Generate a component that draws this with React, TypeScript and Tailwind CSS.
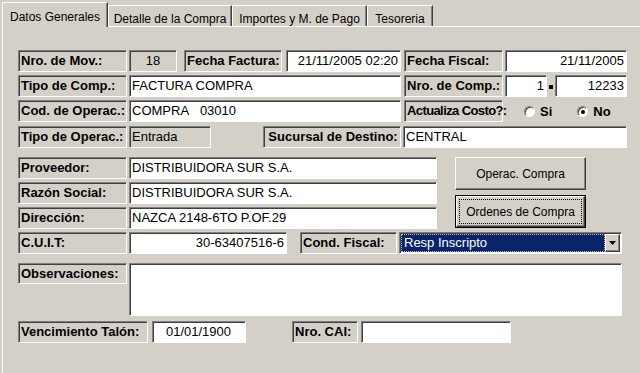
import React from 'react';

const sunken =
  'border border-t-[#808080] border-l-[#808080] border-b-white border-r-white shadow-[inset_1px_1px_0_#404040]';
const raised =
  'border border-t-white border-l-white border-b-[#404040] border-r-[#404040] shadow-[inset_-1px_-1px_0_#808080]';

function Lbl({ className = '', children }: { className?: string; children: React.ReactNode }) {
  return (
    <div className={`${sunken} h-full bg-[#d4d0c8] pl-[2px] flex items-center text-[13px] font-bold text-black whitespace-nowrap ${className}`}>
      {children}
    </div>
  );
}

function Field({ className = '', children }: { className?: string; children?: React.ReactNode }) {
  return (
    <div className={`${sunken} h-full bg-white px-[2px] flex items-center text-[13px] text-black whitespace-nowrap overflow-hidden ${className}`}>
      {children}
    </div>
  );
}

function Radio({ checked }: { checked?: boolean }) {
  return (
    <div className="w-[11px] h-[11px] rounded-full bg-white border border-t-[#808080] border-l-[#808080] border-b-white border-r-white shadow-[inset_1px_1px_0_#404040] flex items-center justify-center">
      {checked && <div className="w-[4px] h-[4px] rounded-full bg-black" />}
    </div>
  );
}

export default function App() {
  const tabs = [
    { label: 'Datos Generales', w: 'w-[106px]', active: true },
    { label: 'Detalle de la Compra', w: 'w-[124px]' },
    { label: 'Importes y M. de Pago', w: 'w-[135px]' },
    { label: 'Tesoreria', w: 'w-[66px]' },
  ];

  return (
    <div className="w-[640px] h-[373px] bg-[#d4d0c8] overflow-hidden font-['Liberation_Sans',Arial,sans-serif]">
      {/* tabs */}
      <div className="h-[26px] flex items-end pl-[2px] relative z-10">
        {tabs.map((t) =>
          t.active ? (
            <div
              key={t.label}
              className={`${t.w} h-[25px] -mb-[1px] bg-[#d4d0c8] border-l border-t border-white border-r border-r-[#404040] shadow-[inset_-1px_0_0_#808080] rounded-tl-[2px] text-[12px] text-black flex justify-center pt-[5px]`}
            >
              {t.label}
            </div>
          ) : (
            <div
              key={t.label}
              className={`${t.w} h-[21px] bg-[#d4d0c8] border-l border-t border-white border-r border-r-[#404040] shadow-[inset_-1px_0_0_#808080] text-[12px] text-black flex justify-center pt-[4px]`}
            >
              {t.label}
            </div>
          )
        )}
      </div>

      {/* panel */}
      <div className="ml-[2px] h-[360px] border-l border-t border-white pl-[15px] pt-[23px]">
        {/* row 1 */}
        <div className="h-[22px] flex">
          <Lbl className="w-[109px]">Nro. de Mov.:</Lbl>
          <div className={`${sunken} ml-[2px] w-[48px] h-full bg-[#d4d0c8] flex items-center justify-center text-[13px]`}>18</div>
          <Lbl className="ml-[7px] w-[98px]">Fecha Factura:</Lbl>
          <Field className="ml-[4px] w-[115px] justify-end">21/11/2005 02:20</Field>
          <Lbl className="ml-[3px] w-[99px]">Fecha Fiscal:</Lbl>
          <Field className="ml-[2px] w-[122px] justify-end">21/11/2005</Field>
        </div>

        {/* row 2 */}
        <div className="h-[22px] mt-[3px] flex">
          <Lbl className="w-[109px]">Tipo de Comp.:</Lbl>
          <Field className="ml-[2px] w-[272px]">FACTURA COMPRA</Field>
          <Lbl className="ml-[3px] w-[99px]">Nro. de Comp.:</Lbl>
          <Field className="ml-[2px] w-[42px] justify-end">1</Field>
          <div className="ml-[2px] w-[4px] h-[4px] bg-black self-center mt-[2px]" />
          <Field className="ml-[2px] w-[72px] justify-end">12233</Field>
        </div>

        {/* row 3 */}
        <div className="h-[22px] mt-[3px] flex">
          <Lbl className="w-[109px]">Cod. de Operac.:</Lbl>
          <Field className="ml-[2px] w-[272px]">COMPRA&nbsp;&nbsp;&nbsp;03010</Field>
          <Lbl className="ml-[3px] w-[99px] tracking-[-0.6px]">Actualiza Costo?:</Lbl>
          <div className="ml-[21px] flex items-center pt-[1px]">
            <Radio />
            <span className="ml-[5px] text-[13px] font-bold">Si</span>
          </div>
          <div className="ml-[25px] flex items-center pt-[1px]">
            <Radio checked />
            <span className="ml-[5px] text-[13px] font-bold">No</span>
          </div>
        </div>

        {/* row 4 */}
        <div className="h-[22px] mt-[4px] flex">
          <Lbl className="w-[109px]">Tipo de Operac.:</Lbl>
          <div className={`${sunken} ml-[2px] w-[82px] h-full bg-[#d4d0c8] pl-[2px] flex items-center text-[13px]`}>Entrada</div>
          <Lbl className="ml-[52px] w-[138px] justify-center">Sucursal de Destino:</Lbl>
          <Field className="ml-[2px] w-[224px]">CENTRAL</Field>
        </div>

        {/* proveedor block */}
        <div className="mt-[9px] flex">
          <div className="flex flex-col gap-[3px]">
            <div className="h-[22px] flex">
              <Lbl className="w-[109px]">Proveedor:</Lbl>
              <Field className="ml-[2px] w-[308px]">DISTRIBUIDORA SUR S.A.</Field>
            </div>
            <div className="h-[22px] flex">
              <Lbl className="w-[109px]">Razón Social:</Lbl>
              <Field className="ml-[2px] w-[308px]">DISTRIBUIDORA SUR S.A.</Field>
            </div>
            <div className="h-[22px] flex">
              <Lbl className="w-[109px]">Dirección:</Lbl>
              <Field className="ml-[2px] w-[308px]">NAZCA 2148-6TO P.OF.29</Field>
            </div>
          </div>
          <div className="ml-[18px] flex flex-col gap-[5px]">
            <div className={`${raised} w-[131px] h-[33px] bg-[#d4d0c8] flex items-center justify-center text-[12px] text-black`}>
              Operac. Compra
            </div>
            <div className="w-[131px] h-[33px] border border-black">
              <div className={`${raised} w-full h-full bg-[#d4d0c8] p-[2px]`}>
                <div className="w-full h-full border border-dotted border-black flex items-center justify-center text-[12px] text-black">
                  Ordenes de Compra
                </div>
              </div>
            </div>
          </div>
        </div>

        {/* cuit row */}
        <div className="h-[22px] mt-[3px] flex">
          <Lbl className="w-[109px]">C.U.I.T:</Lbl>
          <Field className="ml-[2px] w-[158px] justify-end">30-63407516-6</Field>
          <Lbl className="ml-[13px] w-[97px]">Cond. Fiscal:</Lbl>
          <div className={`${sunken} ml-[2px] w-[223px] h-full bg-white flex p-[1px]`}>
            <div className="flex-1 bg-[#0a246a] border border-dotted border-[#c0c0c0] text-white text-[13px] flex items-center pl-[2px]">
              Resp Inscripto
            </div>
            <div className={`${raised} w-[15px] bg-[#d4d0c8] flex items-center justify-center`}>
              <svg width="7" height="4" viewBox="0 0 7 4">
                <path d="M0 0h7L3.5 4z" fill="#000" />
              </svg>
            </div>
          </div>
        </div>

        {/* observaciones */}
        <div className="mt-[9px] flex items-start">
          <Lbl className="w-[109px] !h-[21px]">Observaciones:</Lbl>
          <div className={`${sunken} ml-[2px] w-[493px] h-[53px] bg-white`} />
        </div>

        {/* vencimiento */}
        <div className="h-[22px] mt-[5px] flex">
          <Lbl className="w-[130px]">Vencimiento Talón:</Lbl>
          <Field className="ml-[4px] w-[94px] justify-end pr-[14px]">01/01/1900</Field>
          <Lbl className="ml-[46px] w-[66px]">Nro. CAI:</Lbl>
          <Field className="ml-[3px] w-[150px]" />
        </div>
      </div>
    </div>
  );
}
